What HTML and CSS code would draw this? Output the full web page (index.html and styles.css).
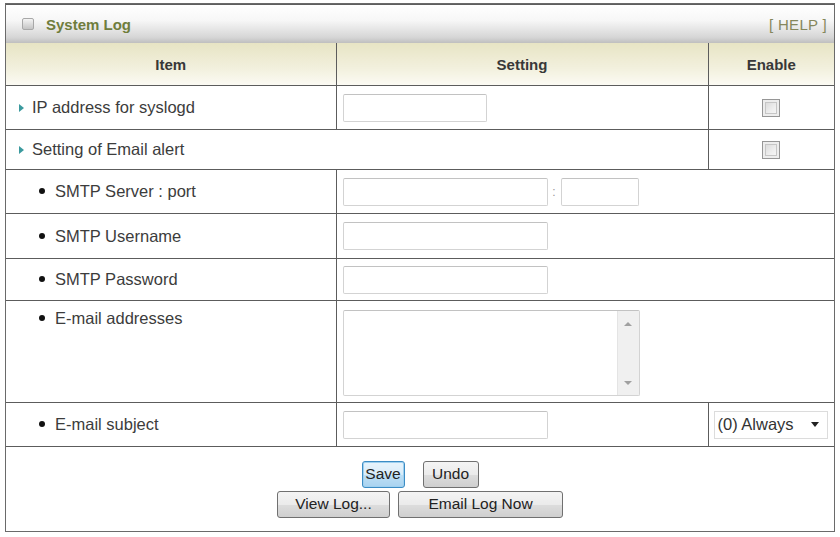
FILE: index.html
```html
<!DOCTYPE html>
<html>
<head>
<meta charset="utf-8">
<link rel="stylesheet" href="styles.css">
</head>
<body>
<div class="panel">
  <div class="titlebar">
    <span class="title"><span class="ticon"></span>System Log</span>
    <span class="help">[ HELP ]</span>
  </div>
  <table class="grid">
    <colgroup><col class="c1"><col class="c2"><col class="c3"></colgroup>
    <tr class="r-head">
      <th>Item</th><th>Setting</th><th>Enable</th>
    </tr>
    <tr class="r-ip">
      <td class="lbl"><span class="arrow"></span>IP address for syslogd</td>
      <td class="set"><span class="inp w144"></span></td>
      <td class="en"><span class="chk"></span></td>
    </tr>
    <tr class="r-alert">
      <td class="lbl" colspan="2"><span class="arrow"></span>Setting of Email alert</td>
      <td class="en"><span class="chk"></span></td>
    </tr>
    <tr class="r-smtp">
      <td class="lbl sub"><span class="dot"></span>SMTP Server : port</td>
      <td class="set" colspan="2"><span class="inp w205"></span><span class="colon">:</span><span class="inp w78"></span></td>
    </tr>
    <tr class="r-user">
      <td class="lbl sub"><span class="dot"></span>SMTP Username</td>
      <td class="set" colspan="2"><span class="inp w205"></span></td>
    </tr>
    <tr class="r-pass">
      <td class="lbl sub"><span class="dot"></span>SMTP Password</td>
      <td class="set" colspan="2"><span class="inp w205"></span></td>
    </tr>
    <tr class="r-addr">
      <td class="lbl sub top"><span class="dot"></span>E-mail addresses</td>
      <td class="set top" colspan="2">
        <div class="tarea"><div class="tbody"></div><div class="sbar"><span class="up"></span><span class="dn"></span></div></div>
      </td>
    </tr>
    <tr class="r-subj">
      <td class="lbl sub"><span class="dot"></span>E-mail subject</td>
      <td class="set"><span class="inp w205"></span></td>
      <td class="selcell"><span class="sel">(0) Always<span class="caret"></span></span></td>
    </tr>
    <tr class="r-btn">
      <td colspan="3" class="btns">
        <div class="brow"><button class="btn focus w43">Save</button><button class="btn w56">Undo</button></div>
        <div class="brow g8"><button class="btn w113">View Log...</button><button class="btn w165">Email Log Now</button></div>
      </td>
    </tr>
  </table>
</div>
</body>
</html>
```
FILE: styles.css
```css
html, body { margin: 0; padding: 0; background: #fff; }
body { font-family: "Liberation Sans", Arial, sans-serif; font-size: 16.5px; color: #3c3c3c; }

.panel {
  margin: 3px 0 0 5px;
  width: 830px;
  border: 1px solid #6a6a6a;
  box-sizing: border-box;
}

.titlebar {
  height: 38px;
  display: flex;
  align-items: center;
  justify-content: space-between;
  padding: 0 7px 0 16px;
  background: linear-gradient(to bottom, #ffffff 0%, #f7f7f7 40%, #d6d6d6 85%, #bfbfbf 100%);
  border-top: 1px solid #5e5e5e;
}
.title { display: flex; align-items: center; font-weight: bold; color: #6f7d3c; font-size: 15px; }
.ticon {
  width: 10px; height: 10px; margin-right: 12px;
  border: 1px solid #a8a8a8; border-radius: 2px;
  background: linear-gradient(to bottom, #f4f4f4, #c4c4c4);
}
.help { color: #85875c; font-size: 15px; letter-spacing: 0.3px; }

.grid {
  width: 100%;
  border-collapse: collapse;
  table-layout: fixed;
  border-style: hidden;
}
.c1 { width: 330px; }
.c2 { width: 372px; }
.c3 { width: 126px; }

.grid th, .grid td { border: 1px solid #5c5c5c; padding: 0; }
.grid th {
  height: 42px;
  font-weight: bold;
  font-size: 15px;
  color: #383838;
  background: linear-gradient(to bottom, #e7e4c4 0%, #f2f0dd 60%, #fbfaf3 100%);
}

.r-ip td { height: 43px; }
.r-alert td { height: 39px; }
.r-smtp td { height: 43px; }
.r-user td { height: 44px; }
.r-pass td { height: 41px; }
.r-addr td { height: 92px; }
.r-subj td { height: 43px; }
.r-btn td { height: 84px; }

.lbl { padding-left: 13px !important; white-space: nowrap; }
.lbl.sub { padding-left: 33px !important; }
.top { vertical-align: top; }
.lbl.top { padding-top: 8px !important; }
.set.top { padding-top: 9px !important; }

.arrow {
  display: inline-block;
  width: 0; height: 0;
  border-left: 5px solid #3b9a9e;
  border-top: 4px solid transparent;
  border-bottom: 4px solid transparent;
  margin-right: 8px;
  vertical-align: 1px;
}
.dot {
  display: inline-block;
  width: 6px; height: 6px; border-radius: 50%;
  background: #111;
  margin-right: 10px;
  vertical-align: 3px;
}

.set { padding-left: 6px !important; }
.inp {
  display: inline-block;
  vertical-align: middle;
  height: 28px;
  box-sizing: border-box;
  border: 1px solid #d3d3d3;
  border-top-color: #c2c2c2;
  border-radius: 2px;
  background: #fff;
}
.w144 { width: 144px; }
.w205 { width: 205px; }
.w78 { width: 78px; }
.colon { display: inline-block; vertical-align: middle; width: 13px; text-align: center; color: #999; font-size: 12px; }

.en { text-align: center; }
.chk {
  display: inline-block;
  width: 18px; height: 18px;
  box-sizing: border-box;
  border: 1px solid #969696;
  background: linear-gradient(135deg, #d4d4d4 0%, #efefef 60%, #fafafa 100%);
  box-shadow: inset 0 0 0 2px #ededed, inset 0 0 0 3px #c6c6c6;
  vertical-align: middle;
}

.tarea {
  width: 297px; height: 86px;
  display: flex;
  box-sizing: border-box;
  border: 1px solid #d3d3d3;
  border-top-color: #c2c2c2;
  border-radius: 2px;
}
.tbody { flex: 1; }
.sbar {
  width: 22px;
  background: #f0f0f0;
  border-left: 1px solid #e4e4e4;
  display: flex; flex-direction: column; justify-content: space-between; align-items: center;
  padding: 11px 0 10px;
  box-sizing: border-box;
}
.up, .dn { width: 0; height: 0; border-left: 4px solid transparent; border-right: 4px solid transparent; }
.up { border-bottom: 4px solid #a0a0a0; }
.dn { border-top: 4px solid #a0a0a0; }

.selcell { padding-left: 5px !important; }
.sel {
  display: inline-flex; align-items: center; justify-content: space-between;
  width: 114px; height: 28px;
  box-sizing: border-box;
  border: 1px solid #dcdcdc;
  padding: 0 8px 0 3px;
  color: #333;
  font-size: 16.5px;
  vertical-align: middle;
}
.caret { width: 0; height: 0; border-left: 4px solid transparent; border-right: 4px solid transparent; border-top: 5px solid #222; }

.btns { text-align: center; vertical-align: middle; }
.brow { display: flex; justify-content: center; gap: 18px; }
.brow.g8 { gap: 8px; margin-top: 3px; }
.btn {
  height: 27px;
  box-sizing: border-box;
  font-family: "Liberation Sans", Arial, sans-serif;
  font-size: 15.5px;
  color: #222;
  border: 1px solid #707070;
  border-radius: 3px;
  background: linear-gradient(to bottom, #f4f4f4 0%, #ebebeb 50%, #dddddd 51%, #cfcfcf 100%);
  padding: 0;
  white-space: nowrap;
}
.btn.focus {
  border-color: #3c8cc4;
  background: linear-gradient(to bottom, #e8f4fc 0%, #d9ecf9 50%, #bedff5 51%, #a9d3f0 100%);
  box-shadow: inset 0 0 0 1px #9fd0ef;
}
.w43 { width: 43px; }
.w56 { width: 56px; }
.w113 { width: 113px; }
.w165 { width: 165px; }
```
